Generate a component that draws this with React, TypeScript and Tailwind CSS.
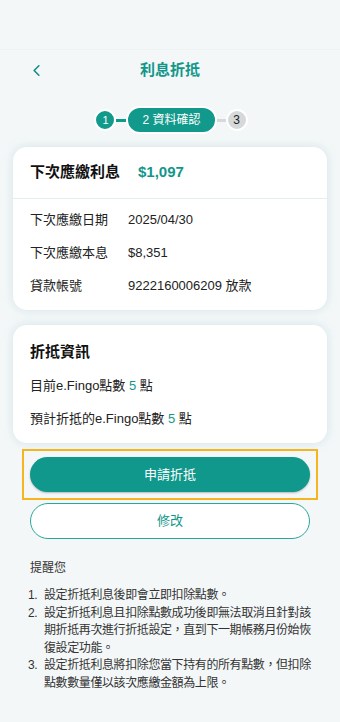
import { ChevronLeft } from 'lucide-react';

const font = { fontFamily: '"Liberation Sans", "Noto Sans CJK TC", sans-serif' };

function Row({ label, value }: { label: string; value: string }) {
  return (
    <div className="flex items-center h-[33px]">
      <span className="w-[98px] text-[13px] text-[#222]">{label}</span>
      <span className="text-[13px] text-[#222]">{value}</span>
    </div>
  );
}

export default function App() {
  return (
    <div className="w-[340px] h-[722px] bg-[#f3f7f8] overflow-hidden" style={font}>
      <div className="h-[50px] border-b border-[#eef2f3]" />

      {/* header */}
      <div className="relative flex items-center justify-center h-[40px]">
        <ChevronLeft className="absolute left-[27px] w-[19px] h-[19px] text-[#0e8f84]" strokeWidth={2} />
        <h1 className="text-[15px] font-bold text-[#13968a]">利息折抵</h1>
      </div>

      {/* stepper */}
      <div className="flex items-center justify-center mt-[16px] ml-[2px]">
        <div className="w-[22px] h-[22px] rounded-full bg-[#11998b] border-2 border-white flex items-center justify-center text-[11px] text-white">1</div>
        <div className="w-[10px] h-[3px] bg-[#11998b]" />
        <div className="h-[28px] px-[14px] rounded-full bg-[#11998b] border-2 border-white flex items-center text-[12px] text-white">
          2 資料確認
        </div>
        <div className="w-[9px] h-[3px] bg-[#d6d9da]" />
        <div className="w-[22px] h-[22px] rounded-full bg-[#d6d9da] border-2 border-white flex items-center justify-center text-[12px] text-[#222]">3</div>
      </div>

      {/* card 1 */}
      <div className="mx-[13px] mt-[13px] bg-white rounded-[14px] shadow-[0_0_8px_rgba(180,210,215,0.5)]">
        <div className="flex items-center h-[52px] px-[17px] border-b border-[#e4eeee]">
          <span className="w-[108px] text-[15px] font-semibold text-[#111]">下次應繳利息</span>
          <span className="text-[15px] font-bold text-[#13968a]">$1,097</span>
        </div>
        <div className="px-[17px] pt-[4px] pb-[8px]">
          <Row label="下次應繳日期" value="2025/04/30" />
          <Row label="下次應繳本息" value="$8,351" />
          <Row label="貸款帳號" value="9222160006209 放款" />
        </div>
      </div>

      {/* card 2 */}
      <div className="mx-[13px] mt-[15px] bg-white rounded-[14px] shadow-[0_0_8px_rgba(180,210,215,0.5)] px-[17px] pt-[16px] pb-[14px]">
        <div className="text-[15px] font-semibold text-[#111] h-[22px] flex items-center">折抵資訊</div>
        <div className="mt-[13px] h-[20px] flex items-center text-[13px] text-[#222]">
          目前e.Fingo點數&nbsp;<span className="text-[#13968a]">5</span>&nbsp;點
        </div>
        <div className="mt-[13px] h-[20px] flex items-center text-[13px] text-[#222]">
          預計折抵的e.Fingo點數&nbsp;<span className="text-[#13968a]">5</span>&nbsp;點
        </div>
      </div>

      {/* buttons */}
      <div className="mx-[22px] mt-[6px] border-2 border-[#f6b51e] px-[6px] py-[6px]">
        <button className="w-full h-[35px] rounded-full bg-[#0f988b] text-white text-[13px] shadow-[0_1px_2px_rgba(0,0,0,0.25)]">
          申請折抵
        </button>
      </div>
      <div className="mx-[30px] mt-[3px]">
        <button className="w-full h-[36px] rounded-full border border-[#2aa79b] bg-white text-[#13968a] text-[13px]">
          修改
        </button>
      </div>

      {/* reminder */}
      <div className="pl-[28px] mt-[20px] text-[#333]">
        <div className="text-[12px] pl-[2px]">提醒您</div>
        <ol className="mt-[10px] text-[12px] tracking-[-0.4px] leading-[17.5px] w-[288px]">
          <li className="flex"><span className="w-[16px] shrink-0">1.</span><span>設定折抵利息後即會立即扣除點數。</span></li>
          <li className="flex"><span className="w-[16px] shrink-0">2.</span><span>設定折抵利息且扣除點數成功後即無法取消且針對該期折抵再次進行折抵設定，直到下一期帳務月份始恢復設定功能。</span></li>
          <li className="flex"><span className="w-[16px] shrink-0">3.</span><span>設定折抵利息將扣除您當下持有的所有點數，但扣除點數數量僅以該次應繳金額為上限。</span></li>
        </ol>
      </div>
    </div>
  );
}
